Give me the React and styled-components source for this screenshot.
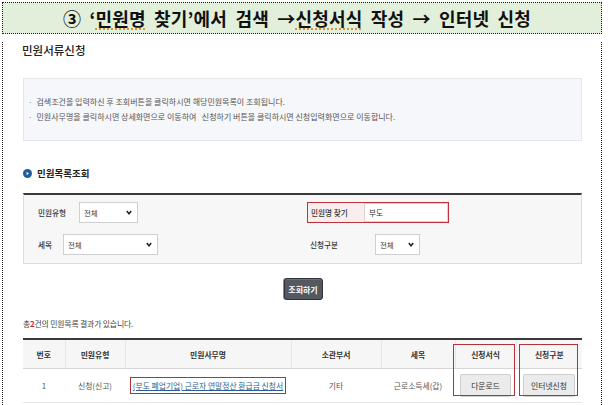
import React from 'react'
import styled, { createGlobalStyle } from 'styled-components'

const GlobalStyle = createGlobalStyle`
  html, body {
    margin: 0;
    padding: 0;
    background: #fff;
  }
  body {
    font-family: 'Noto Sans CJK KR', 'Noto Sans', sans-serif;
    color: #333;
  }
  #root {
    width: 608px;
    height: 405px;
    overflow: hidden;
  }
`

const Page = styled.div`
  padding: 2px 6px 0 2px;
`

const TitleBand = styled.div`
  height: 30px;
  line-height: 30px;
  border: 1px dotted #222;
  background: #e2efda;
  text-align: center;
  padding-right: 10px;
  font-size: 18px;
  font-weight: 700;
  color: #111;
  word-spacing: 4px;
  letter-spacing: 0.2px;
  white-space: nowrap;
`

const Squiggle = styled.span`
  text-decoration: underline dotted #d9892b;
  text-underline-offset: 3px;
`

const Frame = styled.div`
  height: 368px;
  border: 1px dotted #222;
  border-top: none;
  padding: 0 19px 0 20px;
`

const PageTitle = styled.h1`
  margin: 8px 0 0 -1px;
  height: 16px;
  line-height: 16px;
  font-size: 11.5px;
  font-weight: 500;
  color: #222;
`

const InfoBox = styled.ul`
  margin: 20px 0 0;
  padding: 15px 0 16px 4px;
  list-style: none;
  background: #f5f7fa;
  border: 1px solid #e4e7ec;
  font-size: 8px;
  color: #555;
  li {
    height: 15px;
    line-height: 15px;
  }
  li::before {
    content: '·';
    margin-right: 4px;
    color: #888;
  }
`

const SectionTitle = styled.h2`
  margin: 25px 0 0;
  height: 14px;
  display: flex;
  align-items: center;
  gap: 5px;
  font-size: 9.5px;
  font-weight: 700;
  color: #222;
`

const SearchBox = styled.div`
  margin-top: 13px;
  border-top: 2px solid #3a3a3a;
  border-left: 1px solid #dcdcdc;
  border-right: 1px solid #dcdcdc;
  border-bottom: 1px solid #dcdcdc;
  background: #f7f7f7;
  padding: 6px 0 8px;
  display: grid;
  grid-template-columns: 281px 1fr;
  row-gap: 10px;
`

const Field = styled.div`
  display: flex;
  align-items: center;
  gap: ${p => p.$gap || 12}px;
  padding-left: ${p => p.$indent || 0}px;
  height: 22px;
  font-size: 7.6px;
  font-weight: 500;
  color: #333;
`

const Label = styled.span`
  width: ${p => (p.$width ? p.$width + 'px' : 'auto')};
  flex-shrink: 0;
`

const Highlight = styled.div`
  margin-left: 2px;
  width: 142px;
  height: 21px;
  border: 1px solid #c2313c;
  display: flex;
  align-items: center;
  padding-left: 3px;
  box-sizing: border-box;
  font-size: 7.6px;
  font-weight: 500;
  background: #f9eeee;
`

const Select = styled.div`
  width: ${p => p.$width}px;
  height: 21px;
  box-sizing: border-box;
  background: #fff;
  border: 1px solid #cfcfcf;
  display: flex;
  align-items: center;
  justify-content: space-between;
  padding: 0 5px 0 4px;
  font-size: 7.4px;
  font-weight: 400;
  color: #333;
`

const TextInput = styled.div`
  width: 86px;
  height: 19px;
  box-sizing: border-box;
  background: #fff;
  border: 1px solid #e0d0d0;
  display: flex;
  align-items: center;
  padding-left: 4px;
  font-size: 7.6px;
  font-weight: 400;
`

const ButtonRow = styled.div`
  margin-top: 14px;
  display: flex;
  justify-content: center;
  padding-left: 1px;
`

const SearchButton = styled.button`
  width: 39px;
  height: 22px;
  padding: 0;
  border: 1px solid #2f3238;
  border-radius: 3px;
  background: #545861;
  box-shadow: -1px 0 0 #8a8d93, inset 0 1px 0 #6c7078;
  color: #fff;
  font-family: inherit;
  font-size: 8px;
  font-weight: 700;
`

const ResultCount = styled.p`
  margin: 18px 0 0;
  height: 12px;
  line-height: 12px;
  font-size: 7.9px;
  color: #444;
  letter-spacing: -0.2px;
  b {
    color: #d0202c;
    font-weight: 700;
  }
`

const TableWrap = styled.div`
  position: relative;
  margin-top: 8px;
`

const Table = styled.table`
  width: 100%;
  border-collapse: collapse;
  table-layout: fixed;
  font-size: 7.8px;
  border-top: 2px solid #3a3a3a;
  th {
    height: 26px;
    font-weight: 700;
    color: #333;
    background: #f6f6f6;
    border-bottom: 1px solid #d6d6d6;
    border-left: 1px solid #e6e6e6;
  }
  td {
    height: 31px;
    text-align: center;
    color: #555;
    border-bottom: 1px solid #e6e6e6;
  }
  th:first-child {
    border-left: none;
  }
`

const TaskLink = styled.a`
  display: inline-block;
  padding: 2px 2px;
  border: 1px solid #b6303a;
  color: #2b5f8e;
  text-decoration: underline;
  white-space: nowrap;
`

const CellButton = styled.span`
  display: inline-flex;
  align-items: center;
  justify-content: center;
  width: ${p => p.$width}px;
  height: 23px;
  box-sizing: border-box;
  border: 1px solid #cfcfcf;
  border-radius: 2px;
  background: #ebebeb;
  color: #333;
`

const Marker = styled.div`
  position: absolute;
  top: 6px;
  left: ${p => p.$left}px;
  width: ${p => p.$width}px;
  height: 50px;
  border: 1px solid #b6303a;
  pointer-events: none;
`

const Chevron = () => (
  <svg width="6" height="5" viewBox="0 0 6 5">
    <polyline points="0.8,1 3,3.8 5.2,1" fill="none" stroke="#222" strokeWidth="1.5" />
  </svg>
)

const Dot = () => (
  <svg width="9" height="9" viewBox="0 0 9 9">
    <circle cx="4.5" cy="4.5" r="4.5" fill="#1f5c9e" />
    <polygon points="3.6,2.8 5.8,4.5 3.6,6.2" fill="#fff" />
  </svg>
)

const columns = [
  { title: '번호', width: 42 },
  { title: '민원유형', width: 60 },
  { title: '민원사무명', width: 166 },
  { title: '소관부서', width: 90 },
  { title: '세목', width: 74 },
  { title: '신청서식', width: 61 },
  { title: '신청구분', width: 66 },
]

const App = () => (
  <>
    <GlobalStyle />
    <Page>
      <TitleBand>
        ③ ‘<Squiggle>민원명</Squiggle> 찾기’에서 검색 →<Squiggle>신청서식</Squiggle> 작성 → 인터넷 신청
      </TitleBand>
      <Frame>
        <PageTitle>민원서류신청</PageTitle>
        <InfoBox>
          <li>검색조건을 입력하신 후 조회버튼을 클릭하시면 해당민원목록이 조회됩니다.</li>
          <li>민원사무명을 클릭하시면 상세화면으로 이동하여 &nbsp; 신청하기 버튼을 클릭하시면 신청입력화면으로 이동합니다.</li>
        </InfoBox>
        <SectionTitle>
          <Dot />
          민원목록조회
        </SectionTitle>
        <SearchBox>
          <Field $indent={14} $gap={13}>
            <Label>민원유형</Label>
            <Select $width={59}>
              전체
              <Chevron />
            </Select>
          </Field>
          <Field>
            <Highlight>
              <Label $width={53}>민원명 찾기</Label>
              <TextInput>부도</TextInput>
            </Highlight>
          </Field>
          <Field $indent={14} $gap={11}>
            <Label>세목</Label>
            <Select $width={95}>
              전체
              <Chevron />
            </Select>
          </Field>
          <Field $indent={5} $gap={0}>
            <Label $width={53}>신청구분</Label>
            <Select $width={45}>
              전체
              <Chevron />
            </Select>
          </Field>
        </SearchBox>
        <ButtonRow>
          <SearchButton>조회하기</SearchButton>
        </ButtonRow>
        <ResultCount>
          총<b>2</b>건의 민원목록 결과가 있습니다.
        </ResultCount>
        <TableWrap>
          <Table>
            <colgroup>
              {columns.map(c => (
                <col key={c.title} style={{ width: c.width }} />
              ))}
            </colgroup>
            <thead>
              <tr>
                {columns.map(c => (
                  <th key={c.title}>{c.title}</th>
                ))}
              </tr>
            </thead>
            <tbody>
              <tr>
                <td>1</td>
                <td>신청(신고)</td>
                <td>
                  <TaskLink href="#">(부도 폐업기업) 근로자 연말정산 환급금 신청서</TaskLink>
                </td>
                <td>기타</td>
                <td>근로소득세(갑)</td>
                <td>
                  <CellButton $width={51}>다운로드</CellButton>
                </td>
                <td>
                  <CellButton $width={52}>인터넷신청</CellButton>
                </td>
              </tr>
            </tbody>
          </Table>
          <Marker $left={430} $width={60} />
          <Marker $left={496} $width={57} />
        </TableWrap>
      </Frame>
    </Page>
  </>
)

export default App
